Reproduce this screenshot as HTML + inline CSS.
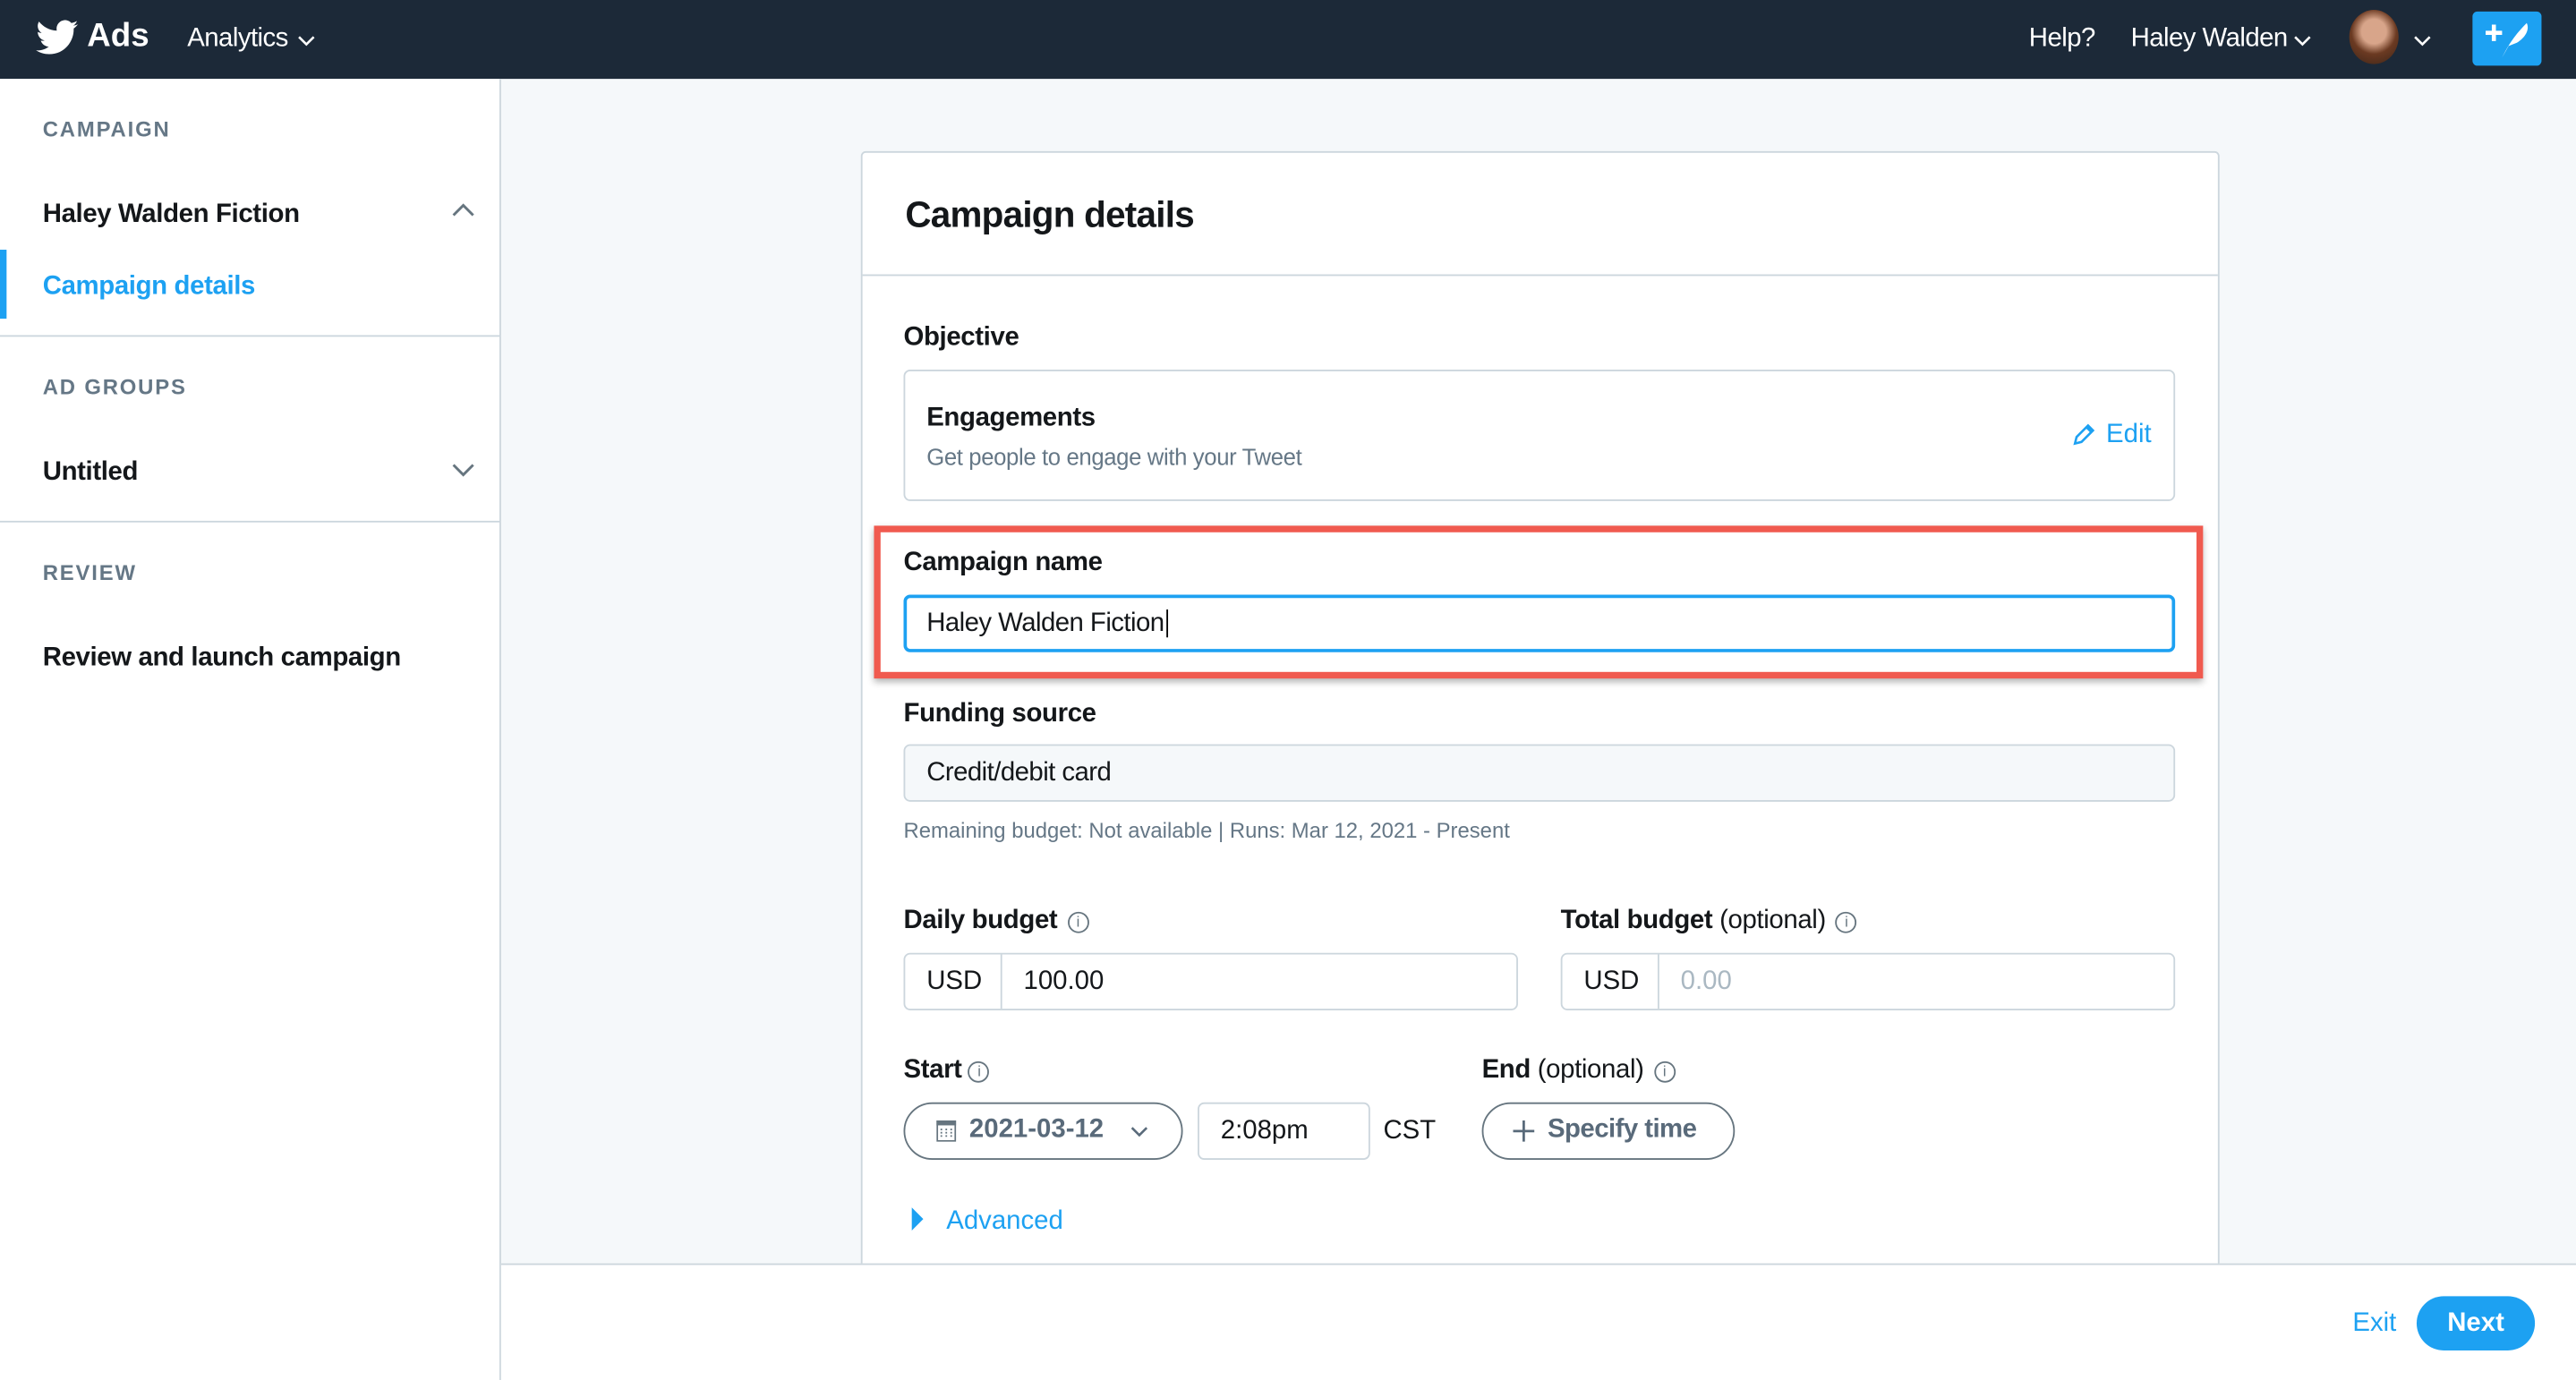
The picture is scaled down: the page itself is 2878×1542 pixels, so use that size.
<!DOCTYPE html>
<html><head><meta charset="utf-8"><style>
*{box-sizing:border-box;margin:0;padding:0}
html,body{width:2878px;height:1542px;overflow:hidden;background:#f5f8fa}
#w{width:1568px;height:840px;transform:scale(1.83546,1.8357);transform-origin:0 0;position:relative;font-family:"Liberation Sans",Arial,sans-serif;color:#14171a;background:#f5f8fa}
.a{position:absolute}
.top{left:0;top:0;width:1568px;height:48px;background:#1c2938;color:#fff}
.side{left:0;top:48px;width:305px;height:792px;background:#fff;border-right:1px solid #ccd6dd}
.cap{font-size:13px;font-weight:bold;letter-spacing:1px;color:#657786}
.b{font-weight:bold;font-size:16px;letter-spacing:-.2px}
.hr{height:1px;background:#ccd6dd}
.card{left:524px;top:92px;width:827px;height:700px;background:#fff;border:1px solid #ccd6dd;border-radius:3px}
.lbl{font-size:16px;font-weight:bold;letter-spacing:-.2px}
.inp{border:1px solid #ccd6dd;border-radius:4px;background:#fff;font-size:16px}
.pill{border:1.5px solid #66757f;border-radius:18px;color:#596a7a;font-weight:bold;font-size:16px}
.info{display:inline-block;width:13px;height:13px;border:1.3px solid #66757f;border-radius:50%;font-size:9px;line-height:11px;text-align:center;color:#66757f;font-weight:normal;vertical-align:1px;margin-left:6px}
</style></head><body><div id="w">
<div class="a top">
<svg class="a" style="left:22px;top:12px" width="26" height="22" viewBox="0 0 24 20"><path fill="#fff" d="M23.6 2.4c-.9.4-1.8.6-2.8.8 1-.6 1.8-1.6 2.1-2.7-.9.6-2 1-3.1 1.2C18.9.7 17.6.1 16.3.1c-2.7 0-4.8 2.2-4.8 4.8 0 .4 0 .8.1 1.1C7.5 5.8 4 3.9 1.6.9c-.4.7-.7 1.6-.7 2.4 0 1.7.9 3.2 2.2 4-.8 0-1.5-.2-2.2-.6v.1c0 2.3 1.7 4.3 3.9 4.7-.4.1-.8.2-1.3.2-.3 0-.6 0-.9-.1.6 1.9 2.4 3.3 4.5 3.4-1.7 1.3-3.7 2.1-6 2.1-.4 0-.8 0-1.2-.1 2.1 1.4 4.7 2.2 7.4 2.2 8.9 0 13.8-7.4 13.8-13.8v-.6c1-.7 1.8-1.6 2.5-2.5z"/></svg>
<div class="a" style="left:53px;top:11px;font-size:20px;font-weight:bold">Ads</div>
<div class="a" style="left:114px;top:15px;font-size:16px;letter-spacing:-.3px">Analytics</div>
<svg class="a" style="left:181px;top:21px" width="11" height="8"><path d="M1 1.5l4.5 4.5 4.5-4.5" stroke="#fff" stroke-width="1.4" fill="none"/></svg>
<div class="a" style="left:1235px;top:15px;font-size:16px;letter-spacing:-.3px">Help?</div>
<div class="a" style="left:1297px;top:15px;font-size:16px;letter-spacing:-.3px">Haley Walden</div>
<svg class="a" style="left:1396px;top:21px" width="11" height="8"><path d="M1 1.5l4.5 4.5 4.5-4.5" stroke="#fff" stroke-width="1.4" fill="none"/></svg>
<div class="a" style="left:1430px;top:6px;width:30px;height:33px;border-radius:50%;background:radial-gradient(circle at 50% 40%,#d8a58a 0 30%,#6b3a22 55%,#3a2418 100%)"></div>
<svg class="a" style="left:1469px;top:21px" width="11" height="8"><path d="M1 1.5l4.5 4.5 4.5-4.5" stroke="#fff" stroke-width="1.4" fill="none"/></svg>
<div class="a" style="left:1505px;top:7px;width:42px;height:33px;border-radius:3px;background:#1da1f2">
<svg width="42" height="33"><path d="M13 8v10M8 13h10" stroke="#fff" stroke-width="2.5"/><path d="M18 28c4-8 8-14 15-21 2 4-1 9-6 12l-5 2z" fill="#fff"/></svg></div>
</div>
<div class="a side">
<div class="a cap" style="left:26px;top:23px">CAMPAIGN</div>
<div class="a b" style="left:26px;top:74px">Haley Walden Fiction</div>
<svg class="a" style="left:275px;top:75px" width="14" height="10"><path d="M1 8l6-6 6 6" stroke="#66757f" stroke-width="1.6" fill="none"/></svg>
<div class="a" style="left:0;top:104px;width:4px;height:42px;background:#1da1f2"></div>
<div class="a b" style="left:26px;top:118px;color:#1da1f2">Campaign details</div>
<div class="a hr" style="left:0;top:156px;width:304px"></div>
<div class="a cap" style="left:26px;top:180px">AD GROUPS</div>
<div class="a b" style="left:26px;top:231px">Untitled</div>
<svg class="a" style="left:275px;top:233px" width="14" height="10"><path d="M1 2l6 6 6-6" stroke="#66757f" stroke-width="1.6" fill="none"/></svg>
<div class="a hr" style="left:0;top:269px;width:304px"></div>
<div class="a cap" style="left:26px;top:293px">REVIEW</div>
<div class="a b" style="left:26px;top:344px">Review and launch campaign</div>
</div>
<div class="a card">
<div class="a" style="left:26px;top:25px;font-size:22px;font-weight:bold;letter-spacing:-.4px">Campaign details</div>
<div class="a hr" style="left:0;top:74px;width:825px"></div>
</div>
<div class="a lbl" style="left:550px;top:197px">Objective</div>
<div class="a inp" style="left:550px;top:225px;width:774px;height:80px"></div>
<div class="a" style="left:564px;top:246px;font-size:16px;font-weight:bold;letter-spacing:-.2px">Engagements</div>
<div class="a" style="left:564px;top:270px;font-size:14px;color:#657786;letter-spacing:-.2px">Get people to engage with your Tweet</div>
<svg class="a" style="left:1261px;top:257px" width="15" height="15"><path d="M2 13l1-4 7-7 3 3-7 7zM9 3l3 3" stroke="#1da1f2" stroke-width="1.4" fill="none"/></svg>
<div class="a" style="left:1282px;top:256px;font-size:16px;color:#1da1f2">Edit</div>
<div class="a" style="left:532px;top:320px;width:809px;height:93px;border:4px solid #f05a4f;box-shadow:0 2px 4px rgba(0,0,0,.3)"></div>
<div class="a lbl" style="left:550px;top:334px">Campaign name</div>
<div class="a inp" style="left:550px;top:362px;width:774px;height:35px;border:2px solid #1da1f2;padding:7px 12px;letter-spacing:-.3px">Haley Walden Fiction<span style="border-left:1px solid #000;margin-left:1px"></span></div>
<div class="a lbl" style="left:550px;top:426px">Funding source</div>
<div class="a inp" style="left:550px;top:453px;width:774px;height:35px;background:#f5f8fa;padding:8px 13px;letter-spacing:-.3px">Credit/debit card</div>
<div class="a" style="left:550px;top:498px;font-size:13px;color:#657786">Remaining budget: Not available | Runs: Mar 12, 2021 - Present</div>
<div class="a lbl" style="left:550px;top:552px">Daily budget<span class="info">i</span></div>
<div class="a inp" style="left:550px;top:580px;width:374px;height:35px"><span class="a" style="left:13px;top:8px">USD</span><span class="a" style="left:58px;top:0;width:1px;height:33px;background:#ccd6dd"></span><span class="a" style="left:72px;top:8px">100.00</span></div>
<div class="a lbl" style="left:950px;top:552px">Total budget <span style="font-weight:normal">(optional)</span><span class="info">i</span></div>
<div class="a inp" style="left:950px;top:580px;width:374px;height:35px"><span class="a" style="left:13px;top:8px">USD</span><span class="a" style="left:58px;top:0;width:1px;height:33px;background:#ccd6dd"></span><span class="a" style="left:72px;top:8px;color:#aab8c2">0.00</span></div>
<div class="a lbl" style="left:550px;top:643px">Start<span class="info" style="margin-left:4px">i</span></div>
<div class="a lbl" style="left:902px;top:643px">End <span style="font-weight:normal">(optional)</span><span class="info">i</span></div>
<div class="a pill" style="left:550px;top:671px;width:170px;height:35px"></div>
<svg class="a" style="left:570px;top:682px" width="12" height="13"><rect x=".5" y=".5" width="11" height="12" fill="none" stroke="#66757f"/><rect x="0" y="0" width="12" height="3" fill="#66757f"/><path d="M3 5v6M6 5v6M9 5v6" stroke="#66757f" stroke-dasharray="1 1"/></svg>
<div class="a" style="left:590px;top:679px;font-size:16px;font-weight:bold;color:#596a7a">2021-03-12</div>
<svg class="a" style="left:688px;top:685px" width="11" height="8"><path d="M1 1.5l4.5 4.5 4.5-4.5" stroke="#596a7a" stroke-width="1.4" fill="none"/></svg>
<div class="a inp" style="left:729px;top:671px;width:105px;height:35px;padding:8px 13px">2:08pm</div>
<div class="a" style="left:842px;top:680px;font-size:16px">CST</div>
<div class="a pill" style="left:902px;top:671px;width:154px;height:35px"></div>
<svg class="a" style="left:921px;top:682px" width="13" height="13"><path d="M6.5 0v13M0 6.5h13" stroke="#596a7a" stroke-width="1.5"/></svg>
<div class="a" style="left:942px;top:679px;font-size:16px;font-weight:bold;color:#596a7a;letter-spacing:-.3px">Specify time</div>
<div class="a" style="left:555px;top:735px;width:0;height:0;border-left:7px solid #1da1f2;border-top:7px solid transparent;border-bottom:7px solid transparent"></div>
<div class="a" style="left:576px;top:735px;font-size:16px;color:#1da1f2">Advanced</div>
<div class="a" style="left:305px;top:769px;width:1263px;height:71px;background:#fff;border-top:1px solid #ccd6dd"></div>
<div class="a" style="left:1432px;top:797px;font-size:16px;color:#1da1f2">Exit</div>
<div class="a" style="left:1471px;top:789px;width:72px;height:33px;border-radius:17px;background:#1da1f2;color:#fff;font-weight:bold;font-size:16px;text-align:center;line-height:33px">Next</div>
</div></body></html>
